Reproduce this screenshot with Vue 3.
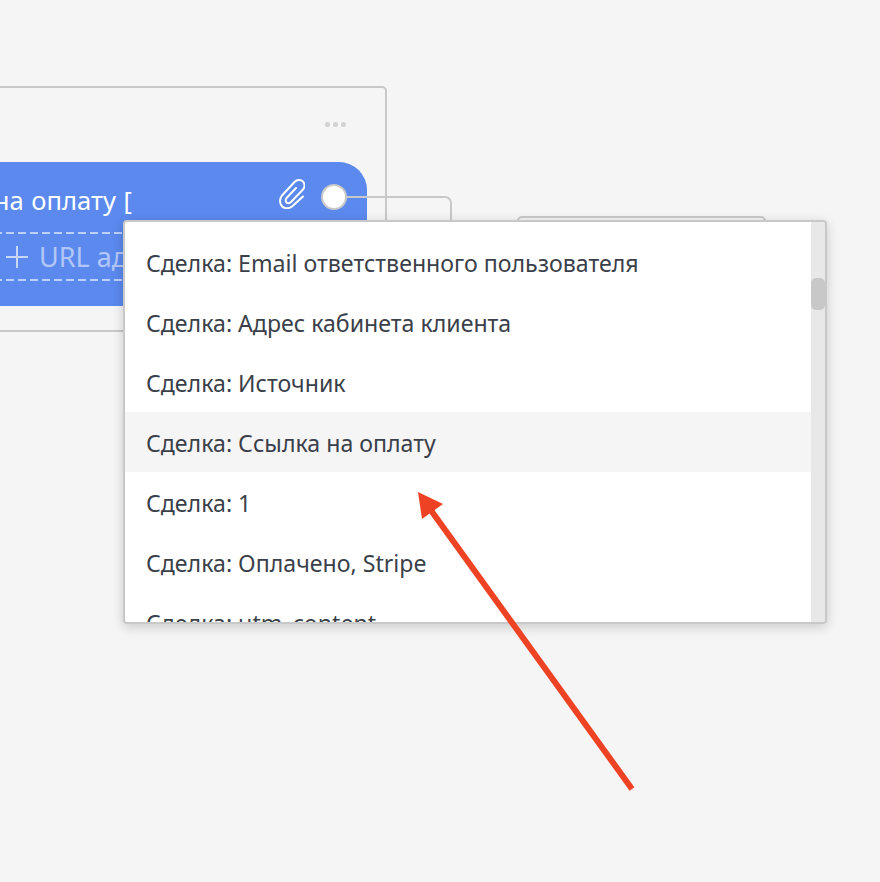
<script setup>
const rows = [
  'Сделка: Email ответственного пользователя',
  'Сделка: Адрес кабинета клиента',
  'Сделка: Источник',
  'Сделка: Ссылка на оплату',
  'Сделка: 1',
  'Сделка: Оплачено, Stripe',
  'Сделка: utm_content'
]
</script>

<template>
  <div class="canvas">
    <div class="node">
      <div class="dots"><i></i><i></i><i></i></div>
      <div class="block">
        <div class="title">на оплату [</div>
        <div class="url">
          <svg class="plus" viewBox="0 0 22 22" width="22" height="22" stroke="#c8d7f9" stroke-width="2">
            <path d="M0 11H22M11 0V22" />
          </svg>
          <span>URL адрес</span>
        </div>
        <svg class="clip" viewBox="0 0 26 30" width="26" height="30" fill="none" stroke="#fff" stroke-width="2" stroke-linecap="round" stroke-linejoin="round">
          <path d="M24 17.5 13 27.5C9 30.5 3.5 29.5 1.8 25.5 .5 22 1 19 3 16.5L15.5 3C18 .5 22 .5 24 2.5 26 5 26 8 24 10.5L12 23C10.5 24.5 8.5 24.5 7.5 23.5 6.5 22 6.5 20 8 18.5L17 9" />
        </svg>
        <div class="handle"></div>
      </div>
    </div>
    <div class="wire"></div>
    <div class="node2"></div>

    <div class="menu">
      <div class="list">
        <div v-for="(r, i) in rows" :key="r" class="row" :class="{ active: i === 3 }">{{ r }}</div>
      </div>
      <div class="track"><div class="thumb"></div></div>
    </div>

    <svg class="arrow" width="880" height="882" viewBox="0 0 880 882">
      <line x1="632" y1="789" x2="430" y2="509" stroke="#ee4224" stroke-width="6" />
      <polygon points="418,492 443,504 422,519" fill="#ee4224" />
    </svg>
  </div>
</template>

<style scoped>
.canvas {
  position: relative;
  width: 880px;
  height: 882px;
  overflow: hidden;
  background: #f5f5f5;
  font-family: "Noto Sans", "Open Sans", sans-serif;
}
.node {
  position: absolute;
  left: -200px;
  top: 86px;
  width: 587px;
  height: 246px;
  box-sizing: border-box;
  border: 2px solid #c8c8c8;
  border-radius: 5px;
}
.dots {
  position: absolute;
  right: 39px;
  top: 34px;
  display: flex;
  gap: 3px;
}
.dots i {
  width: 5px;
  height: 5px;
  border-radius: 50%;
  background: #d2d2d2;
}
.block {
  position: absolute;
  left: 0;
  right: 18px;
  top: 74px;
  height: 144px;
  background: #5b89ee;
  border-radius: 0 28px 28px 0;
}
.title {
  position: absolute;
  right: 235px;
  top: 21px;
  color: #fff;
  font-size: 25.6px;
  word-spacing: 1px;
  line-height: 36px;
  white-space: nowrap;
}
.url {
  position: absolute;
  left: 0;
  right: 0;
  top: 70px;
  height: 49px;
  box-sizing: border-box;
  display: flex;
  align-items: center;
  gap: 11px;
  padding-left: 204px;
  color: rgba(255, 255, 255, 0.55);
  font-size: 27px;
  white-space: nowrap;
  background-image:
    repeating-linear-gradient(90deg, rgba(255, 255, 255, 0.6) 0 8px, transparent 8px 12px),
    repeating-linear-gradient(90deg, rgba(255, 255, 255, 0.6) 0 8px, transparent 8px 12px);
  background-size: 100% 2px, 100% 2px;
  background-position: 0 0, 0 100%;
  background-repeat: no-repeat;
}
.plus {
  flex: none;
}
.clip {
  position: absolute;
  right: 62px;
  top: 17px;
}
.handle {
  position: absolute;
  right: 20px;
  top: 22px;
  width: 26px;
  height: 26px;
  box-sizing: border-box;
  background: #fff;
  border: 2px solid #c8c8c8;
  border-radius: 50%;
}
.wire {
  position: absolute;
  left: 346px;
  top: 196px;
  width: 106px;
  height: 40px;
  box-sizing: border-box;
  border-top: 2px solid #c8c8c8;
  border-right: 2px solid #c8c8c8;
  border-top-right-radius: 7px;
}
.node2 {
  position: absolute;
  left: 517px;
  top: 216px;
  width: 249px;
  height: 40px;
  box-sizing: border-box;
  border: 2px solid #c8c8c8;
  border-radius: 5px;
}
.menu {
  position: absolute;
  left: 123px;
  top: 220px;
  width: 704px;
  height: 404px;
  box-sizing: border-box;
  display: flex;
  background: #fff;
  border: 2px solid #c8c8c8;
  border-radius: 4px;
  overflow: hidden;
  box-shadow: 0 3px 12px rgba(0, 0, 0, 0.18);
}
.list {
  flex: 1;
  padding-top: 10px;
  overflow: hidden;
}
.row {
  height: 60px;
  padding-left: 21px;
  color: #3b3f4a;
  font-size: 23.15px;
  line-height: 62px;
  white-space: nowrap;
}
.row.active {
  background: #f5f5f5;
}
.track {
  position: relative;
  width: 14px;
  background: #e8e8e8;
}
.thumb {
  position: absolute;
  left: 0;
  top: 56px;
  width: 14px;
  height: 32px;
  background: #c8c8c8;
  border-radius: 5px;
}
.arrow {
  position: absolute;
  left: 0;
  top: 0;
  pointer-events: none;
}
</style>
